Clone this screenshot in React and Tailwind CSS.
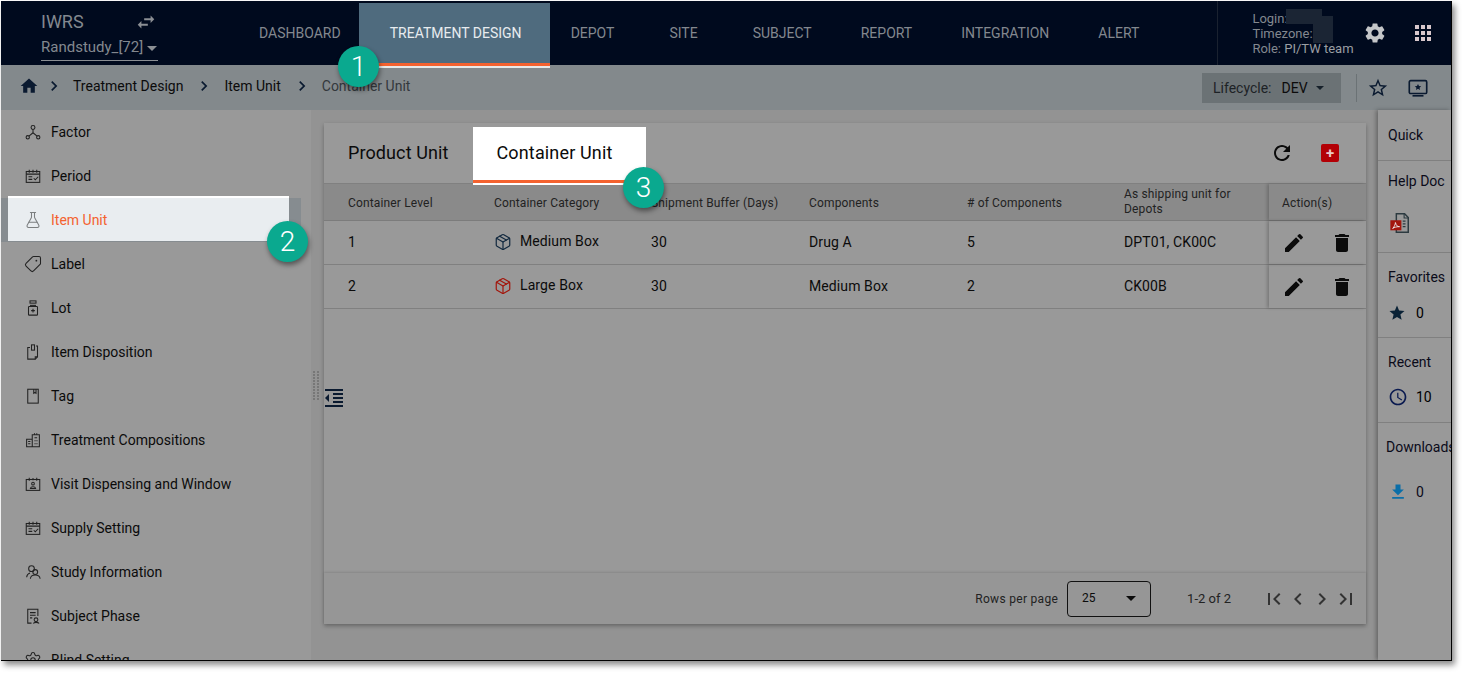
import React from "react";
import { FlaskConical, Tag, Settings, Package } from "lucide-react";

const Mi = ({ d, className }) => (
  <svg viewBox="0 0 24 24" className={className} fill="currentColor">
    <path d={d} />
  </svg>
);

const Line = ({ className, children }) => (
  <svg viewBox="0 0 24 24" className={className} fill="none" stroke="currentColor" strokeWidth="1.4">
    {children}
  </svg>
);

const FactorIcon = ({ className }) => (
  <Line className={className}>
    <circle cx="12" cy="6" r="2.6" />
    <circle cx="5" cy="19" r="2.2" />
    <circle cx="19" cy="19" r="2.2" />
    <path d="M12 8.6v4.4M12 13l-5.4 4.4M12 13l5.4 4.4" />
  </Line>
);

const CalendarCheckIcon = ({ className }) => (
  <Line className={className}>
    <rect x="3" y="6" width="18" height="14.5" />
    <path d="M3 9.5h18M7 3.5v4M12 3.5v4M17 3.5v4M6 13h5M6 16.5h5M13 15l2 2 4-4" />
  </Line>
);

const LotIcon = ({ className }) => (
  <Line className={className}>
    <rect x="8" y="2.5" width="8" height="3" />
    <path d="M8 8.5h8" />
    <rect x="6" y="10" width="12" height="11.5" rx="1" />
    <path d="M12 13v5M9.5 15.5h5" />
  </Line>
);

const DispositionIcon = ({ className }) => (
  <Line className={className}>
    <path d="M8 6H5v15.5h10l3-3V4h-2" />
    <path d="M15 21.5v-3h3" />
    <rect x="10" y="2.5" width="4" height="7" />
  </Line>
);

const TagIcon = ({ className }) => (
  <Line className={className}>
    <rect x="5" y="3" width="14" height="18.5" />
    <path d="M13 3v5.5l1.5-1 1.5 1V3" />
  </Line>
);

const BuildingIcon = ({ className }) => (
  <Line className={className}>
    <path d="M3.5 21V11h7.5v10zM11 21V5h9.500v16z" />
    <path d="M14 3v2M17 3v2M5.500 14h3M5.500 17h3M14 9h3.500M14 13h1.500M16.500 13h1.500M14 17h1.500M16.500 17h1.500" />
  </Line>
);

const CalendarPersonIcon = ({ className }) => (
  <Line className={className}>
    <rect x="3" y="6" width="18" height="14.5" />
    <path d="M7 3.500v4M17 3.500v4M12 4v3" />
    <circle cx="12" cy="11.500" r="1.800" />
    <path d="M8.500 18c.5-3 6.500-3 7 0z" />
  </Line>
);

const PeopleIcon = ({ className }) => (
  <Line className={className}>
    <circle cx="10" cy="7.500" r="3.800" />
    <circle cx="15" cy="12" r="3.200" />
    <path d="M3.500 19c.3-3 2-5 4.500-5.700M8.500 21c.3-3.500 2.700-5 6.500-5s6 1.500 6.500 5" />
  </Line>
);

const PhaseIcon = ({ className }) => (
  <Line className={className}>
    <path d="M10 21.500H5V3h13.500v9" />
    <path d="M8 7.500h7.500M8 11h7.500M8 14.500h3" />
    <circle cx="16" cy="17" r="2.500" />
    <path d="M12.500 22c.5-2 6.500-2 7.500 0" />
  </Line>
);

const BlindIcon = ({ className }) => <Settings className={className} strokeWidth={1.4} />;
const FlaskIcon = ({ className }) => <FlaskConical className={className} strokeWidth={1.4} />;
const LabelIcon = ({ className }) => <Tag className={`${className} -scale-x-100`} strokeWidth={1.4} />;

const icons = {
  home: "M10 20v-6h4v6h5v-8h3L12 3 2 12h3v8z",
  swap: "M6.99 11L3 15l3.99 4v-3H14v-2H6.99v-3zM21 9l-3.99-4v3H10v2h7.01v3L21 9z",
  gear: "M19.14 12.94c.04-.3.06-.61.06-.94 0-.32-.02-.64-.07-.94l2.03-1.58a.49.49 0 0 0 .12-.61l-1.92-3.32a.488.488 0 0 0-.59-.22l-2.39.96c-.5-.38-1.03-.7-1.62-.94l-.36-2.54a.484.484 0 0 0-.48-.41h-3.84c-.24 0-.43.17-.47.41l-.36 2.54c-.59.24-1.13.57-1.62.94l-2.39-.96c-.22-.08-.47 0-.59.22L2.74 8.87c-.12.21-.08.47.12.61l2.03 1.58c-.05.3-.09.63-.09.94s.02.64.07.94l-2.03 1.58a.49.49 0 0 0-.12.61l1.92 3.32c.12.22.37.29.59.22l2.39-.96c.5.38 1.03.7 1.62.94l.36 2.54c.05.24.24.41.48.41h3.84c.24 0 .44-.17.47-.41l.36-2.54c.59-.24 1.13-.56 1.62-.94l2.39.96c.22.08.47 0 .59-.22l1.92-3.32c.12-.22.07-.47-.12-.61l-2.01-1.58zM12 15.6c-1.98 0-3.6-1.62-3.6-3.6s1.62-3.6 3.6-3.6 3.6 1.62 3.6 3.6-1.62 3.6-3.6 3.6z",
  apps: "M4 8h4V4H4v4zm6 12h4v-4h-4v4zm-6 0h4v-4H4v4zm0-6h4v-4H4v4zm6 0h4v-4h-4v4zm6-10v4h4V4h-4zm-6 4h4V4h-4v4zm6 6h4v-4h-4v4zm0 6h4v-4h-4v4z",
  chevron: "M10 6L8.59 7.41 13.17 12l-4.58 4.59L10 18l6-6z",
  chevronLeft: "M15.41 7.41L14 6l-6 6 6 6 1.41-1.41L10.83 12z",
  first: "M18.41 16.59L13.82 12l4.59-4.59L17 6l-6 6 6 6zM6 6h2v12H6z",
  last: "M5.59 7.41L10.18 12l-4.59 4.59L7 18l6-6-6-6zM16 6h2v12h-2z",
  starOutline: "M22 9.24l-7.19-.62L12 2 9.19 8.63 2 9.24l5.46 4.73L5.82 21 12 17.27 18.18 21l-1.63-7.03L22 9.24zM12 15.4l-3.76 2.27 1-4.28-3.32-2.88 4.38-.38L12 6.1l1.71 4.04 4.38.38-3.32 2.88 1 4.28L12 15.4z",
  star: "M12 17.27L18.18 21l-1.64-7.03L22 9.24l-7.19-.61L12 2 9.19 8.63 2 9.24l5.46 4.73L5.82 21z",
  refresh: "M17.65 6.35C16.2 4.9 14.21 4 12 4c-4.42 0-7.99 3.58-7.99 8s3.57 8 7.99 8c3.73 0 6.84-2.55 7.73-6h-2.08c-.82 2.33-3.04 4-5.65 4-3.31 0-6-2.69-6-6s2.69-6 6-6c1.66 0 3.14.69 4.22 1.78L13 11h7V4l-2.35 2.35z",
  edit: "M3 17.25V21h3.75L17.81 9.94l-3.75-3.75L3 17.25zM20.71 7.04a.996.996 0 0 0 0-1.41l-2.34-2.34a.996.996 0 0 0-1.41 0l-1.83 1.83 3.75 3.75 1.83-1.83z",
  trash: "M6 19c0 1.1.9 2 2 2h8c1.1 0 2-.9 2-2V7H6v12zM19 4h-3.5l-1-1h-5l-1 1H5v2h14V4z",
  indent: "M11 17h10v-2H11v2zm-8-5l4 4V8l-4 4zm0 9h18v-2H3v2zM3 3v2h18V3H3zm8 6h10V7H11v2zm0 4h10v-2H11v2z",
  clock: "M11.99 2C6.47 2 2 6.48 2 12s4.47 10 9.99 10C17.52 22 22 17.52 22 12S17.52 2 11.99 2zM12 20c-4.42 0-8-3.58-8-8s3.58-8 8-8 8 3.58 8 8-3.58 8-8 8zm.5-13H11v6l5.25 3.15.75-1.23-4.5-2.67z",
  download: "M19 9h-4V3H9v6H5l7 7 7-7zM5 18v2h14v-2H5z",
};

const navItems = [
  { label: "DASHBOARD", cls: "ml-[82px]" },
  { label: "DEPOT", cls: "ml-[21px]" },
  { label: "SITE", cls: "ml-[55px]" },
  { label: "SUBJECT", cls: "ml-[55px]" },
  { label: "REPORT", cls: "ml-[49px]" },
  { label: "INTEGRATION", cls: "ml-[49px]" },
  { label: "ALERT", cls: "ml-[49px]" },
];

const sideItems = [
  { label: "Factor", Icon: FactorIcon },
  { label: "Period", Icon: CalendarCheckIcon },
  { label: "Item Unit", Icon: FlaskIcon, active: true },
  { label: "Label", Icon: LabelIcon },
  { label: "Lot", Icon: LotIcon },
  { label: "Item Disposition", Icon: DispositionIcon },
  { label: "Tag", Icon: TagIcon },
  { label: "Treatment Compositions", Icon: BuildingIcon },
  { label: "Visit Dispensing and Window", Icon: CalendarPersonIcon },
  { label: "Supply Setting", Icon: CalendarCheckIcon },
  { label: "Study Information", Icon: PeopleIcon },
  { label: "Subject Phase", Icon: PhaseIcon },
  { label: "Blind Setting", Icon: BlindIcon },
];

const gridCols = "grid grid-cols-[170px_157px_158px_158px_157px_145px_97px]";

const rows = [
  { level: "1", cat: "Medium Box", color: "text-[#12293f]", comp: "Drug A", n: "5", depots: "DPT01, CK00C" },
  { level: "2", cat: "Large Box", color: "text-[#a3160c]", comp: "Medium Box", n: "2", depots: "CK00B" },
];

const Badge = ({ n, className }) => (
  <div
    className={`absolute z-30 flex h-[41px] w-[41px] items-center justify-center rounded-full bg-[#0aa98f] text-[28px] font-light text-white shadow-[1px_3px_5px_rgba(0,0,0,0.45)] ${className}`}
  >
    {n}
  </div>
);

function SideItem({ label, Icon, active }) {
  if (active) {
    return (
      <div className="relative h-11 w-[300px] shrink-0 bg-[#868c90]">
        <div className="absolute left-[7px] top-[-2px] flex h-[45px] w-[281px] items-center border-t-2 border-white bg-[#e9edf0] text-sm text-[#f4622f]">
          <Icon className="ml-4 h-[18px] w-[18px] text-[#7c7f80]" />
          <span className="ml-[9px]">{label}</span>
        </div>
      </div>
    );
  }
  return (
    <div className="flex h-11 shrink-0 items-center text-sm text-[#0b0b0b]">
      <Icon className="ml-[23px] h-[18px] w-[18px] text-[#222]" />
      <span className="ml-[9px]">{label}</span>
    </div>
  );
}

function RightCell({ title, className, children }) {
  return (
    <div className={`border-b border-[#808080] pl-[10px] ${className}`}>
      <div className="whitespace-nowrap text-sm text-[#0b0b1a]">{title}</div>
      {children}
    </div>
  );
}

export default function App() {
  return (
    <div className="h-[673px] w-full overflow-hidden bg-white font-['Roboto',sans-serif]">
      <div className="relative ml-px mt-px flex h-[660px] w-[1451px] flex-col overflow-hidden border-b border-r border-black shadow-[3px_4px_6px_rgba(0,0,0,0.45)]">
        {/* top nav */}
        <header className="flex h-16 shrink-0 bg-[#000a1e] text-sm text-[#83888f]">
          <div className="w-[157px] shrink-0 pl-10 pt-[9px]">
            <div className="flex items-center">
              <span className="text-lg leading-[24px]">IWRS</span>
              <Mi d={icons.swap} className="ml-[51px] h-[22px] w-[22px] text-[#8b8f94]" />
            </div>
            <div className="mt-[2px] flex h-[25px] w-[117px] items-center border-b border-[#8b8f94] text-[15px]">
              Randstudy_[72]
              <span className="ml-[4px] h-0 w-0 border-x-[5px] border-t-[5px] border-x-transparent border-t-[#8b8f94]" />
            </div>
          </div>
          <nav className="ml-[19px] flex items-center">
            <span className={navItems[0].cls}>{navItems[0].label}</span>
            <div className="relative z-10 ml-[18px] mt-[2px] flex h-[63px] w-[191px] items-center justify-center border-b-[3px] border-[#f4622f] bg-[#4f6b7e] pl-[3px] text-[#e8ecef] shadow-[0_2px_0_#e8e8e8]">
              TREATMENT DESIGN
            </div>
            {navItems.slice(1).map((item) => (
              <span key={item.label} className={item.cls}>
                {item.label}
              </span>
            ))}
          </nav>
          <div className="ml-[78px] flex flex-1 items-center border-l border-[#1a2230]">
            <div className="relative ml-[34px] w-[110px] text-[13px] leading-[15px]">
              <div>Login:</div>
              <div>Timezone:</div>
              <div>
                Role: <span className="text-[#9a9ea3]">PI/TW team</span>
              </div>
              <div className="absolute left-[34px] top-[-2px] h-[15px] w-[36px] bg-[#1b2534]" />
              <div className="absolute left-[61px] top-[5px] h-[27px] w-[20px] bg-[#1b2534]" />
            </div>
            <Mi d={icons.gear} className="ml-px h-6 w-6 text-[#c4c6c8]" />
            <Mi d={icons.apps} className="ml-6 h-6 w-6 text-[#d8c8cc]" />
          </div>
        </header>

        {/* breadcrumb */}
        <div className="flex h-[45px] shrink-0 items-center bg-[#83898c] text-sm text-[#0b0b0b]">
          <div className="flex items-center pb-[3px]">
            <Mi d={icons.home} className="ml-[18px] h-[20px] w-[20px] text-[#0a1a30]" />
            <Mi d={icons.chevron} className="ml-[5px] h-5 w-5 text-[#0a1a30]" />
            <span className="ml-[9px]">Treatment Design</span>
            <Mi d={icons.chevron} className="ml-[11px] h-5 w-5 text-[#0a1a30]" />
            <span className="ml-[10px]">Item Unit</span>
            <Mi d={icons.chevron} className="ml-[11px] h-5 w-5 text-[#0a1a30]" />
            <span className="ml-[10px] text-[#33383c]">Container Unit</span>
          </div>
          <div className="ml-auto flex h-[30px] w-[139px] items-center bg-[#6b7275] pl-[11px]">
            <span className="text-[#1d2226]">Lifecycle:</span>
            <span className="ml-[10px]">DEV</span>
            <span className="ml-[8px] h-0 w-0 border-x-[4px] border-t-[4px] border-x-transparent border-t-[#16202a]" />
          </div>
          <div className="ml-[15px] h-7 w-px bg-[#6b7275]" />
          <Mi d={icons.starOutline} className="ml-[10px] h-[22px] w-[22px] text-[#0a1a30]" />
          <svg viewBox="0 0 24 24" className="ml-[18px] mr-[22px] h-[22px] w-[22px] text-[#0a1a30]" fill="none" stroke="currentColor" strokeWidth="1.8">
            <rect x="2.5" y="4" width="19" height="14" rx="1.5" />
            <path d="M6 20.5h12" />
            <path d="M12 7.5l1.1 2.3 2.4.3-1.8 1.6.5 2.4-2.2-1.2-2.2 1.2.5-2.4-1.8-1.6 2.4-.3z" fill="currentColor" stroke="none" />
          </svg>
        </div>

        {/* body */}
        <div className="flex min-h-0 flex-1 bg-[#939393]">
          <aside className="flex w-[310px] shrink-0 flex-col overflow-hidden bg-[#999999]">
            {sideItems.map((item) => (
              <SideItem key={item.label} {...item} />
            ))}
          </aside>

          {/* splitter */}
          <div className="relative w-[13px] shrink-0">
            <div className="absolute left-[2px] top-[261px] grid grid-cols-2 gap-x-[2px] gap-y-px">
              {Array.from({ length: 20 }).map((_, i) => (
                <span key={i} className="h-[2px] w-[2px] bg-[#777]" />
              ))}
            </div>
          </div>

          <main className="relative w-[1042px] shrink-0 pt-[13px]">
            <Mi d={icons.indent} className="absolute left-[-2px] top-[276px] h-[24px] w-[24px] text-[#0a1a30]" />
            <section className="flex h-[501px] flex-col bg-[#999999] shadow-[0_2px_4px_rgba(0,0,0,0.3)]">
              <div className="flex h-[61px] shrink-0 items-start border-b border-[#808080]">
                <div className="ml-6 mt-[20px] text-lg leading-[20px] tracking-[0.1px] text-[#0b0b0b]">Product Unit</div>
                <div className="relative z-10 ml-[25px] mt-[4px] flex h-[58px] w-[173px] items-start border-b-2 border-white bg-white pl-[23px] pt-4 text-lg leading-[20px] tracking-[0.15px] text-[#0b0b0b]">
                  Container Unit
                  <div className="absolute bottom-0 left-0 h-[3px] w-full bg-[#f4622f]" />
                </div>
                <Mi d={icons.refresh} className="ml-auto mt-[18px] h-6 w-6 text-[#0b0b0b]" />
                <div className="ml-[27px] mr-[27px] mt-[21px] flex h-[18px] w-[18px] items-center justify-center rounded-[2px] bg-[#b30006] text-[15px] font-bold leading-none text-[#e9c9c9]">
                  +
                </div>
              </div>

              {/* table head */}
              <div className={`${gridCols} h-[37px] shrink-0 items-center border-b border-[#7c7c7c] bg-[#8a8a8a] text-xs tracking-[0.15px] text-[#222]`}>
                <span className="pl-6 pt-[2px]">Container Level</span>
                <span className="pt-[2px]">Container Category</span>
                <span className="pt-[2px]">Shipment Buffer (Days)</span>
                <span className="pt-[2px]">Components</span>
                <span className="pt-[2px]"># of Components</span>
                <span className="leading-[15px]">As shipping unit for Depots</span>
                <span className="flex h-full items-center pl-[13px] pt-[2px] shadow-[-2px_0_3px_rgba(0,0,0,0.2)]">Action(s)</span>
              </div>

              {rows.map((r) => (
                <div key={r.level} className={`${gridCols} h-11 shrink-0 items-center border-b border-[#808080] text-sm tracking-[0.1px] text-[#0b0b0b]`}>
                  <span className="-mt-[2px] pl-6">{r.level}</span>
                  <span className="-mt-[2px] flex items-center">
                    <Package className={`h-[18px] w-[18px] ${r.color}`} strokeWidth={1.6} />
                    <span className="-mt-px ml-[8px]">{r.cat}</span>
                  </span>
                  <span className="-mt-[2px]">30</span>
                  <span className="-mt-[2px]">{r.comp}</span>
                  <span className="-mt-[2px]">{r.n}</span>
                  <span className="-mt-[2px]">{r.depots}</span>
                  <span className="flex h-full items-center pl-[13px] shadow-[-2px_0_3px_rgba(0,0,0,0.2)]">
                    <Mi d={icons.edit} className="h-6 w-6 text-[#0b0b0b]" />
                    <Mi d={icons.trash} className="ml-6 h-6 w-6 text-[#0b0b0b]" />
                  </span>
                </div>
              ))}

              <div className="mt-auto flex h-[51px] shrink-0 items-center bg-[#969696] text-xs text-[#222] shadow-[0_-1px_2px_rgba(0,0,0,0.12)]">
                <span className="ml-auto tracking-[0.3px]">Rows per page</span>
                <div className="ml-[9px] flex h-9 w-[84px] items-center rounded border border-[#111] pb-[2px] pl-[14px] text-[#0b0b0b]">
                  25
                  <span className="ml-[30px] mt-[2px] h-0 w-0 border-x-[5px] border-t-[5px] border-x-transparent border-t-[#0b0b0b]" />
                </div>
                <span className="ml-9 text-[13px]">1-2 of 2</span>
                <Mi d={icons.first} className="ml-[31px] h-6 w-6 text-[#333]" />
                <Mi d={icons.chevronLeft} className="h-6 w-6 text-[#333]" />
                <Mi d={icons.chevron} className="h-6 w-6 text-[#333]" />
                <Mi d={icons.last} className="mr-2 h-6 w-6 text-[#333]" />
              </div>
            </section>
          </main>

          {/* quick panel */}
          <aside className="ml-[12px] flex w-[73px] shrink-0 flex-col overflow-hidden bg-[#999999] shadow-[-2px_0_4px_rgba(0,0,0,0.3)]">
            <RightCell title="Quick" className="h-[51px] shrink-0 pt-[15px]" />
            <RightCell title="Help Doc" className="h-[92px] shrink-0 pt-[10px]">
              <svg viewBox="0 0 24 24" className="ml-[1px] mt-[20px] h-[24px] w-[22px]">
                <path d="M8 2h9l4 4v16H8z" fill="none" stroke="#2c3a40" strokeWidth="1.6" />
                <path d="M16.500 2v4.500H21M15 10h3M15 13h3M15 16h3" fill="none" stroke="#2c3a40" strokeWidth="1.200" />
                <rect x="1.500" y="9" width="12" height="11" fill="#a3160c" />
                <path d="M4 18c2-2 3-5 3-6.500 1 3.500 2 4.500 4.500 4.500-3 0-5.500 .5-7.500 2z" fill="none" stroke="#eee" strokeWidth="1" />
              </svg>
            </RightCell>
            <RightCell title="Favorites" className="h-[85px] shrink-0 pt-[14px]">
              <div className="mt-4 flex items-center text-sm">
                <Mi d={icons.star} className="h-[18px] w-[18px] text-[#0a2236]" />
                <span className="ml-[10px]">0</span>
              </div>
            </RightCell>
            <RightCell title="Recent" className="h-[85px] shrink-0 pt-[14px]">
              <div className="mt-[15px] flex items-center text-sm">
                <Mi d={icons.clock} className="h-[20px] w-[20px] text-[#0a1a50]" />
                <span className="ml-[8px]">10</span>
              </div>
            </RightCell>
            <div className="pl-2 pt-[14px] text-sm text-[#0b0b1a]">
              <div className="whitespace-nowrap">Downloads</div>
              <div className="mt-[25px] flex items-center pl-[2px]">
                <Mi d={icons.download} className="h-5 w-5 text-[#0a6ea8]" />
                <span className="ml-[8px]">0</span>
              </div>
            </div>
          </aside>
        </div>

        <Badge n="1" className="left-[337px] top-[45px]" />
        <Badge n="2" className="left-[266px] top-[220px]" />
        <Badge n="3" className="left-[622px] top-[166px]" />
      </div>
    </div>
  );
}
